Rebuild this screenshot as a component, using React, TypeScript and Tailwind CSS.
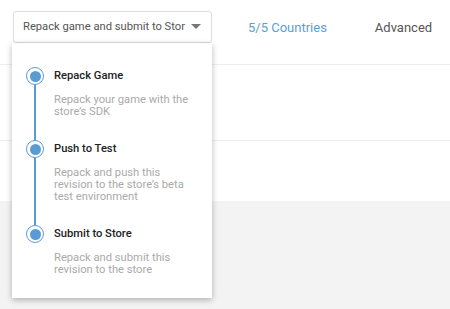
const steps = [
  { title: "Repack Game", desc: ["Repack your game with the", "store’s SDK"] },
  { title: "Push to Test", desc: ["Repack and push this", "revision to the store’s beta", "test environment"] },
  { title: "Submit to Store", desc: ["Repack and submit this", "revision to the store"] },
];

function Dot() {
  return (
    <div className="w-[18px] h-[18px] shrink-0 rounded-full border-[1.5px] border-[#5b9bd5] bg-white flex items-center justify-center">
      <div className="w-[11px] h-[11px] rounded-full bg-[#5b9bd5]" />
    </div>
  );
}

export default function App() {
  return (
    <div
      className="relative w-[450px] h-[309px] overflow-hidden bg-white flex flex-col"
      style={{ fontFamily: "Roboto, 'Liberation Sans', sans-serif" }}
    >
      <div className="h-[65px] shrink-0 border-b border-[#eeeeee] flex items-start pt-[11px]">
        <div className="ml-[13px] w-[199px] h-[32px] border border-[#dddddd] rounded-[3px] flex items-center pl-[9px] pr-[8px]">
          <span className="text-[11.2px] text-[#555] whitespace-nowrap overflow-hidden flex-1">
            Repack game and submit to Stor
          </span>
          <svg width="10" height="6" viewBox="0 0 10 6" className="ml-[4px] mr-[2px]">
            <path d="M0 0 L10 0 L5 5 Z" fill="#777" />
          </svg>
        </div>
        <span className="ml-[36px] mt-[7px] text-[13px] text-[#5b9fdc]">5/5 Countries</span>
        <span className="ml-[48px] mt-[7px] text-[13px] text-[#555]">Advanced</span>
      </div>
      <div className="h-[76px] shrink-0 border-b border-[#eeeeee]" />
      <div className="h-[60px] shrink-0" />
      <div className="flex-1 bg-[#f3f3f3]" />

      <div className="absolute left-[12px] top-[43px] w-[200px] h-[255px] bg-white shadow-[0_2px_6px_rgba(0,0,0,0.28)] pt-[24px] pl-[14px] pr-[8px]">
        {steps.map((s, i) => (
          <div key={s.title} className="flex">
            <div className="w-[18px] flex flex-col items-center">
              <Dot />
              {i < steps.length - 1 && <div className="w-[2px] flex-1 bg-[#5b9bd5]" />}
            </div>
            <div className={"ml-[10px] " + (i < steps.length - 1 ? "pb-[22px]" : "")}>
              <div className="h-[18px] flex items-center text-[11.2px] font-medium text-[#222]">{s.title}</div>
              <div className="mt-[9px] text-[11.2px] leading-[12px] text-[#aaaaaa]">
                {s.desc.map((d) => (
                  <div key={d}>{d}</div>
                ))}
              </div>
            </div>
          </div>
        ))}
      </div>
    </div>
  );
}
